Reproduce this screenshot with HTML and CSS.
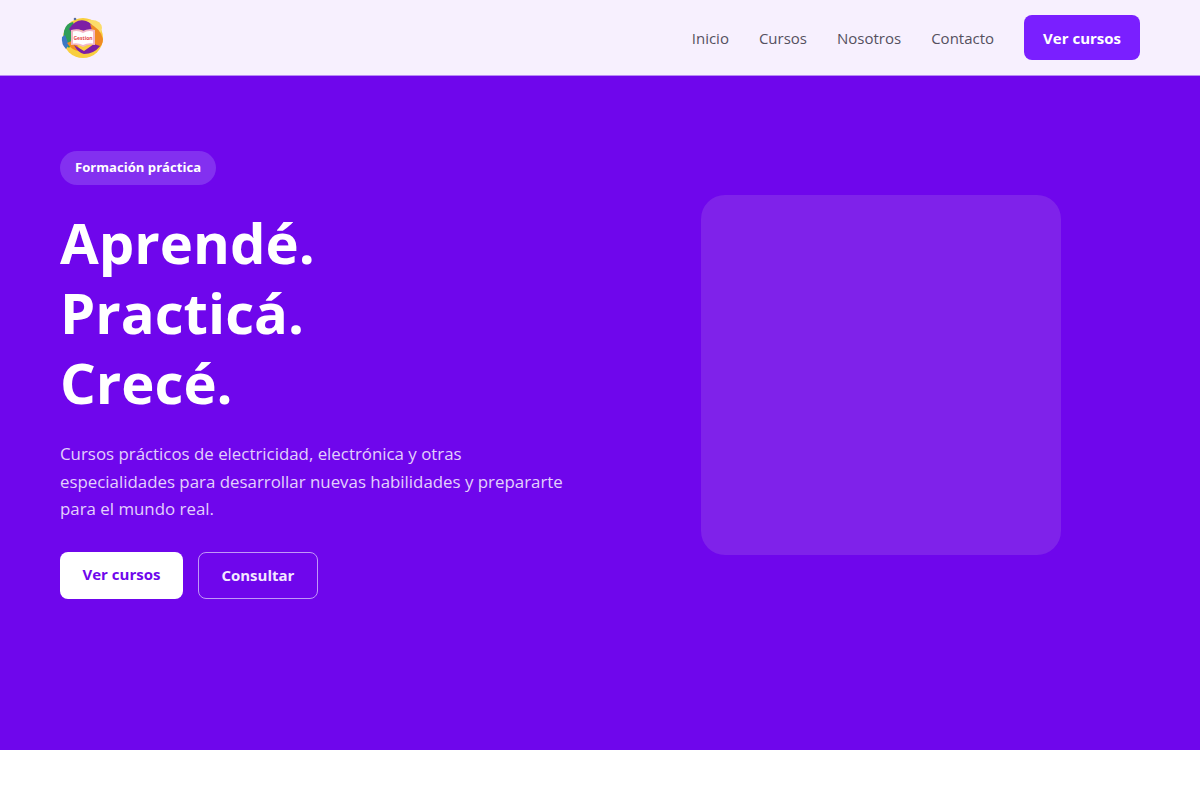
FILE: index.html
```html
<!DOCTYPE html>
<html lang="es">
<head>
    <meta charset="UTF-8">
    <meta name="viewport" content="width=device-width, initial-scale=1.0">
    <title>Formación práctica</title>
    <link rel="stylesheet" href="styles.css">
</head>
<body>
    <header class="navbar">
        <svg class="logo" viewBox="0 0 46 46" width="46" height="46" aria-label="Logo">
            <circle cx="23" cy="23" r="20" fill="#f8cf3f"/>
            <ellipse cx="32" cy="13" rx="10" ry="8" fill="#fbdc6a"/>
            <path d="M4 16 Q6 8 13 7 L18 20 L9 33 Q2 27 4 16Z" fill="#2f9e58"/>
            <path d="M2 22 Q1 29 6 34 L9 30 L5 20Z" fill="#3b78c4"/>
            <path d="M9 14 Q16 3 26 6 Q32 8 34 14 L24 16 Q16 12 12 18Z" fill="#7d1fa5"/>
            <path d="M30 9 Q40 13 43 24 Q43 31 37 34 L31 24 Q33 16 30 9Z" fill="#f08a24"/>
            <path d="M7 28 L14 25 L21 36 Q13 37 7 28Z" fill="#f08a24"/>
            <path d="M14 30 L24 36 L34 29 L40 31 Q34 39 24 39 Q18 38 14 30Z" fill="#7d1fa5"/>
            <path d="M11 15 Q18 13 23 16 Q28 13 35 15 L35 30 Q28 29 23 32 Q18 29 11 30Z" fill="#f3b7c6"/>
            <path d="M13 16.500 Q18 15 23 18 Q28 15 33 16.500 L33 28.500 Q28 27.500 23 30 Q18 27.500 13 28.500Z" fill="#fff"/>
            <circle cx="15" cy="4" r="1.300" fill="#5a6f9c"/>
            <text class="logo-text" x="23" y="25" text-anchor="middle">Gestion</text>
        </svg>
        <nav class="nav-links">
            <a href="#">Inicio</a>
            <a href="#">Cursos</a>
            <a href="#">Nosotros</a>
            <a href="#">Contacto</a>
            <a href="#" class="nav-btn">Ver cursos</a>
        </nav>
    </header>

    <section class="hero">
        <div class="hero-text">
            <span class="badge">Formación práctica</span>
            <h1>Aprendé.<br>Practicá.<br>Crecé.</h1>
            <p>Cursos prácticos de electricidad, electrónica y otras especialidades para desarrollar nuevas habilidades y prepararte para el mundo real.</p>
            <div class="hero-actions">
                <a href="#" class="btn btn-white">Ver cursos</a>
                <a href="#" class="btn btn-outline">Consultar</a>
            </div>
        </div>
        <div class="hero-media">
            <div class="hero-box"></div>
        </div>
    </section>
</body>
</html>
```

FILE: styles.css
```css
* {
    margin: 0;
    padding: 0;
    box-sizing: border-box;
}

body {
    font-family: 'Open Sans', sans-serif;
    background: #fff;
    color: #fff;
}

a {
    text-decoration: none;
}

.navbar {
    height: 76px;
    padding: 0 60px;
    display: flex;
    justify-content: space-between;
    align-items: center;
    background: #f7f0fe;
    border-bottom: 1px solid #b98af5;
}

.logo {
    display: block;
}

.logo-text {
    font-size: 5px;
    font-weight: 700;
    fill: #e5484d;
}

.nav-links {
    display: flex;
    align-items: center;
    gap: 30px;
}

.nav-links a {
    font-size: 15px;
    color: #55505f;
}

.nav-links .nav-btn {
    padding: 0 19px;
    height: 45px;
    display: flex;
    align-items: center;
    background: #7a1fff;
    color: #fff;
    font-weight: 700;
    border-radius: 8px;
}

.hero {
    height: 674px;
    padding: 75px 60px 0;
    display: grid;
    grid-template-columns: 1fr 1fr;
    gap: 42px;
    align-items: start;
    background: #6f06ec;
}

.badge {
    display: inline-block;
    height: 34px;
    padding: 0 15px;
    line-height: 33px;
    font-size: 13.100px;
    font-weight: 700;
    border-radius: 17px;
    background: #8330f0;
}

h1 {
    margin-top: 22px;
    font-size: 56.200px;
    line-height: 70px;
    font-weight: 700;
}

.hero-text p {
    margin-top: 23px;
    max-width: 520px;
    font-size: 16.880px;
    line-height: 27.700px;
    color: #e3d0fc;
}

.hero-actions {
    margin-top: 29px;
    display: flex;
    gap: 15px;
}

.btn {
    height: 47px;
    display: flex;
    align-items: center;
    padding-bottom: 2px;
    font-size: 15px;
    font-weight: 700;
    border-radius: 8px;
}

.btn-white {
    padding-left: 22.500px;
    padding-right: 22.500px;
    padding-bottom: 3px;
    background: #fff;
    color: #6f06ec;
}

.btn-outline {
    padding-left: 22.500px;
    padding-right: 22.500px;
    color: #f3e9ff;
    border: 1px solid #c197f8;
}

.hero-media {
    padding-top: 44px;
    display: flex;
    justify-content: center;
}

.hero-box {
    width: 360px;
    height: 360px;
    border-radius: 24px;
    background: #7f22ea;
}
```
